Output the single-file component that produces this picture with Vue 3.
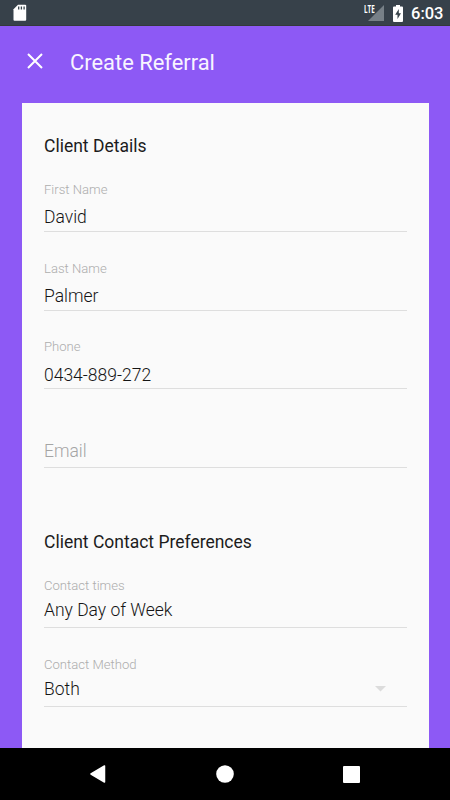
<script setup>
const details = [
  { label: 'First Name', value: 'David' },
  { label: 'Last Name', value: 'Palmer' },
  { label: 'Phone', value: '0434-889-272' },
  { label: '', value: 'Email', empty: true },
]
const preferences = [
  { label: 'Contact times', value: 'Any Day of Week' },
  { label: 'Contact Method', value: 'Both', select: true },
]
</script>

<template>
  <div class="screen">
    <div class="status">
      <svg class="sd" width="14" height="18" viewBox="0 0 14 18">
        <path d="M5 .8h7.200q1 0 1 1v14q0 1-1 1H1.500q-1 0-1-1V5.300z" fill="#fff" />
        <path d="M5.700 2.500v3M8.400 2.500v3M11.100 2.500v3" stroke="#37434a" stroke-width="1.300" />
      </svg>
      <div class="tray">
        <span class="lte">LTE</span>
        <svg class="signal" width="16" height="16" viewBox="0 0 16 16"><path d="M16 0v16H0z" fill="#778087" /></svg>
        <svg class="battery" width="10" height="17" viewBox="0 0 10 17">
          <path d="M3 0h4v1.500h2q1 0 1 1V16q0 1-1 1H1q-1 0-1-1V2.500q0-1 1-1h2z" fill="#fff" />
          <path d="M5.800 4L2.200 9.700h2.300V14l3.500-5.700H5.800z" fill="#37434a" />
        </svg>
        <span class="time">6:03</span>
      </div>
    </div>
    <header class="appbar">
      <svg class="close" width="16" height="16" viewBox="0 0 16 16"><path d="M1 1l14 14M15 1L1 15" stroke="#fff" stroke-width="2" /></svg>
      <h1>Create Referral</h1>
    </header>
    <main class="card">
      <h2>Client Details</h2>
      <div v-for="f in details" :key="f.value" class="field" :class="{ empty: f.empty }">
        <label v-if="f.label">{{ f.label }}</label>
        <div class="value">{{ f.value }}</div>
      </div>
      <h2 class="second">Client Contact Preferences</h2>
      <div v-for="f in preferences" :key="f.label" class="field picker">
        <label>{{ f.label }}</label>
        <div class="value">
          <span>{{ f.value }}</span>
          <svg v-if="f.select" class="caret" width="11" height="6" viewBox="0 0 11 6"><path d="M0 0h11L5.500 5.500z" fill="#dcdcdc" /></svg>
        </div>
      </div>
    </main>
    <nav class="nav">
      <svg width="16" height="18" viewBox="0 0 16 18"><path d="M14.500 1v16L1 9z" fill="#fff" stroke="#fff" stroke-width="1.500" stroke-linejoin="round" /></svg>
      <svg width="18" height="18" viewBox="0 0 18 18"><circle cx="9" cy="9" r="8.800" fill="#fff" /></svg>
      <svg width="17" height="17" viewBox="0 0 17 17"><rect width="17" height="17" rx="1" fill="#fff" /></svg>
    </nav>
  </div>
</template>

<style>
body { margin: 0; }
</style>

<style scoped>
.screen {
  width: 450px;
  height: 800px;
  overflow: hidden;
  display: flex;
  flex-direction: column;
  background: #8d59f5;
  font-family: Roboto, "Liberation Sans", sans-serif;
}
.status {
  flex: none;
  box-sizing: border-box;
  height: 26px;
  padding: 4px 9px 0 13px;
  display: flex;
  justify-content: space-between;
  align-items: flex-start;
  background: #37414a;
  border-bottom: 1px solid #34393c;
}
.tray { display: flex; color: #fff; }
.lte {
  font: 700 10.500px/10px "Open Sans", sans-serif;
  width: 4px;
  transform: scaleX(0.6);
  transform-origin: left;
}
.signal { margin-top: 1px; }
.battery { margin: 1px 8px 0 9px; }
.time { font-size: 16.500px; font-weight: 500; line-height: 20px; width: 30px; }
.appbar {
  flex: none;
  height: 77px;
  display: flex;
  align-items: flex-start;
}
.close { margin: 27px 0 0 27px; }
h1 {
  margin: 24px 0 0 27px;
  color: #f8f4ff;
  font-size: 21.900px;
  line-height: 26px;
  font-weight: 400;
}
.card {
  flex: 1;
  min-height: 0;
  overflow: hidden;
  margin: 0 21px 0 22px;
  padding: 0 22px;
  background: #fafafa;
}
h2 {
  margin: 0;
  height: 50.300px;
  box-sizing: border-box;
  padding-top: 33px;
  font-size: 17.500px;
  line-height: 20px;
  font-weight: 400;
  color: #1c1c1c;
}
h2.second { height: 81px; padding-top: 64px; }
.field {
  box-sizing: border-box;
  height: 78.700px;
  display: flex;
  flex-direction: column;
  justify-content: flex-end;
  gap: 9.200px;
  padding-bottom: 3.800px;
  border-bottom: 1px solid #dedede;
}
.field.empty { padding-bottom: 6px; }
.field.picker { height: 78.900px; gap: 6px; padding-bottom: 7px; }
label { font-size: 13.100px; line-height: 16px; font-weight: 300; color: #adadad; }
.value {
  display: flex;
  align-items: center;
  justify-content: space-between;
  font-size: 17.500px;
  line-height: 20px;
  font-weight: 300;
  color: #151515;
}
.empty .value { color: #a5a5a5; }
.caret { margin-right: 21px; }
.nav {
  flex: none;
  height: 52px;
  box-sizing: border-box;
  padding: 0 90px;
  display: flex;
  align-items: center;
  justify-content: space-between;
  background: #000;
}
</style>
